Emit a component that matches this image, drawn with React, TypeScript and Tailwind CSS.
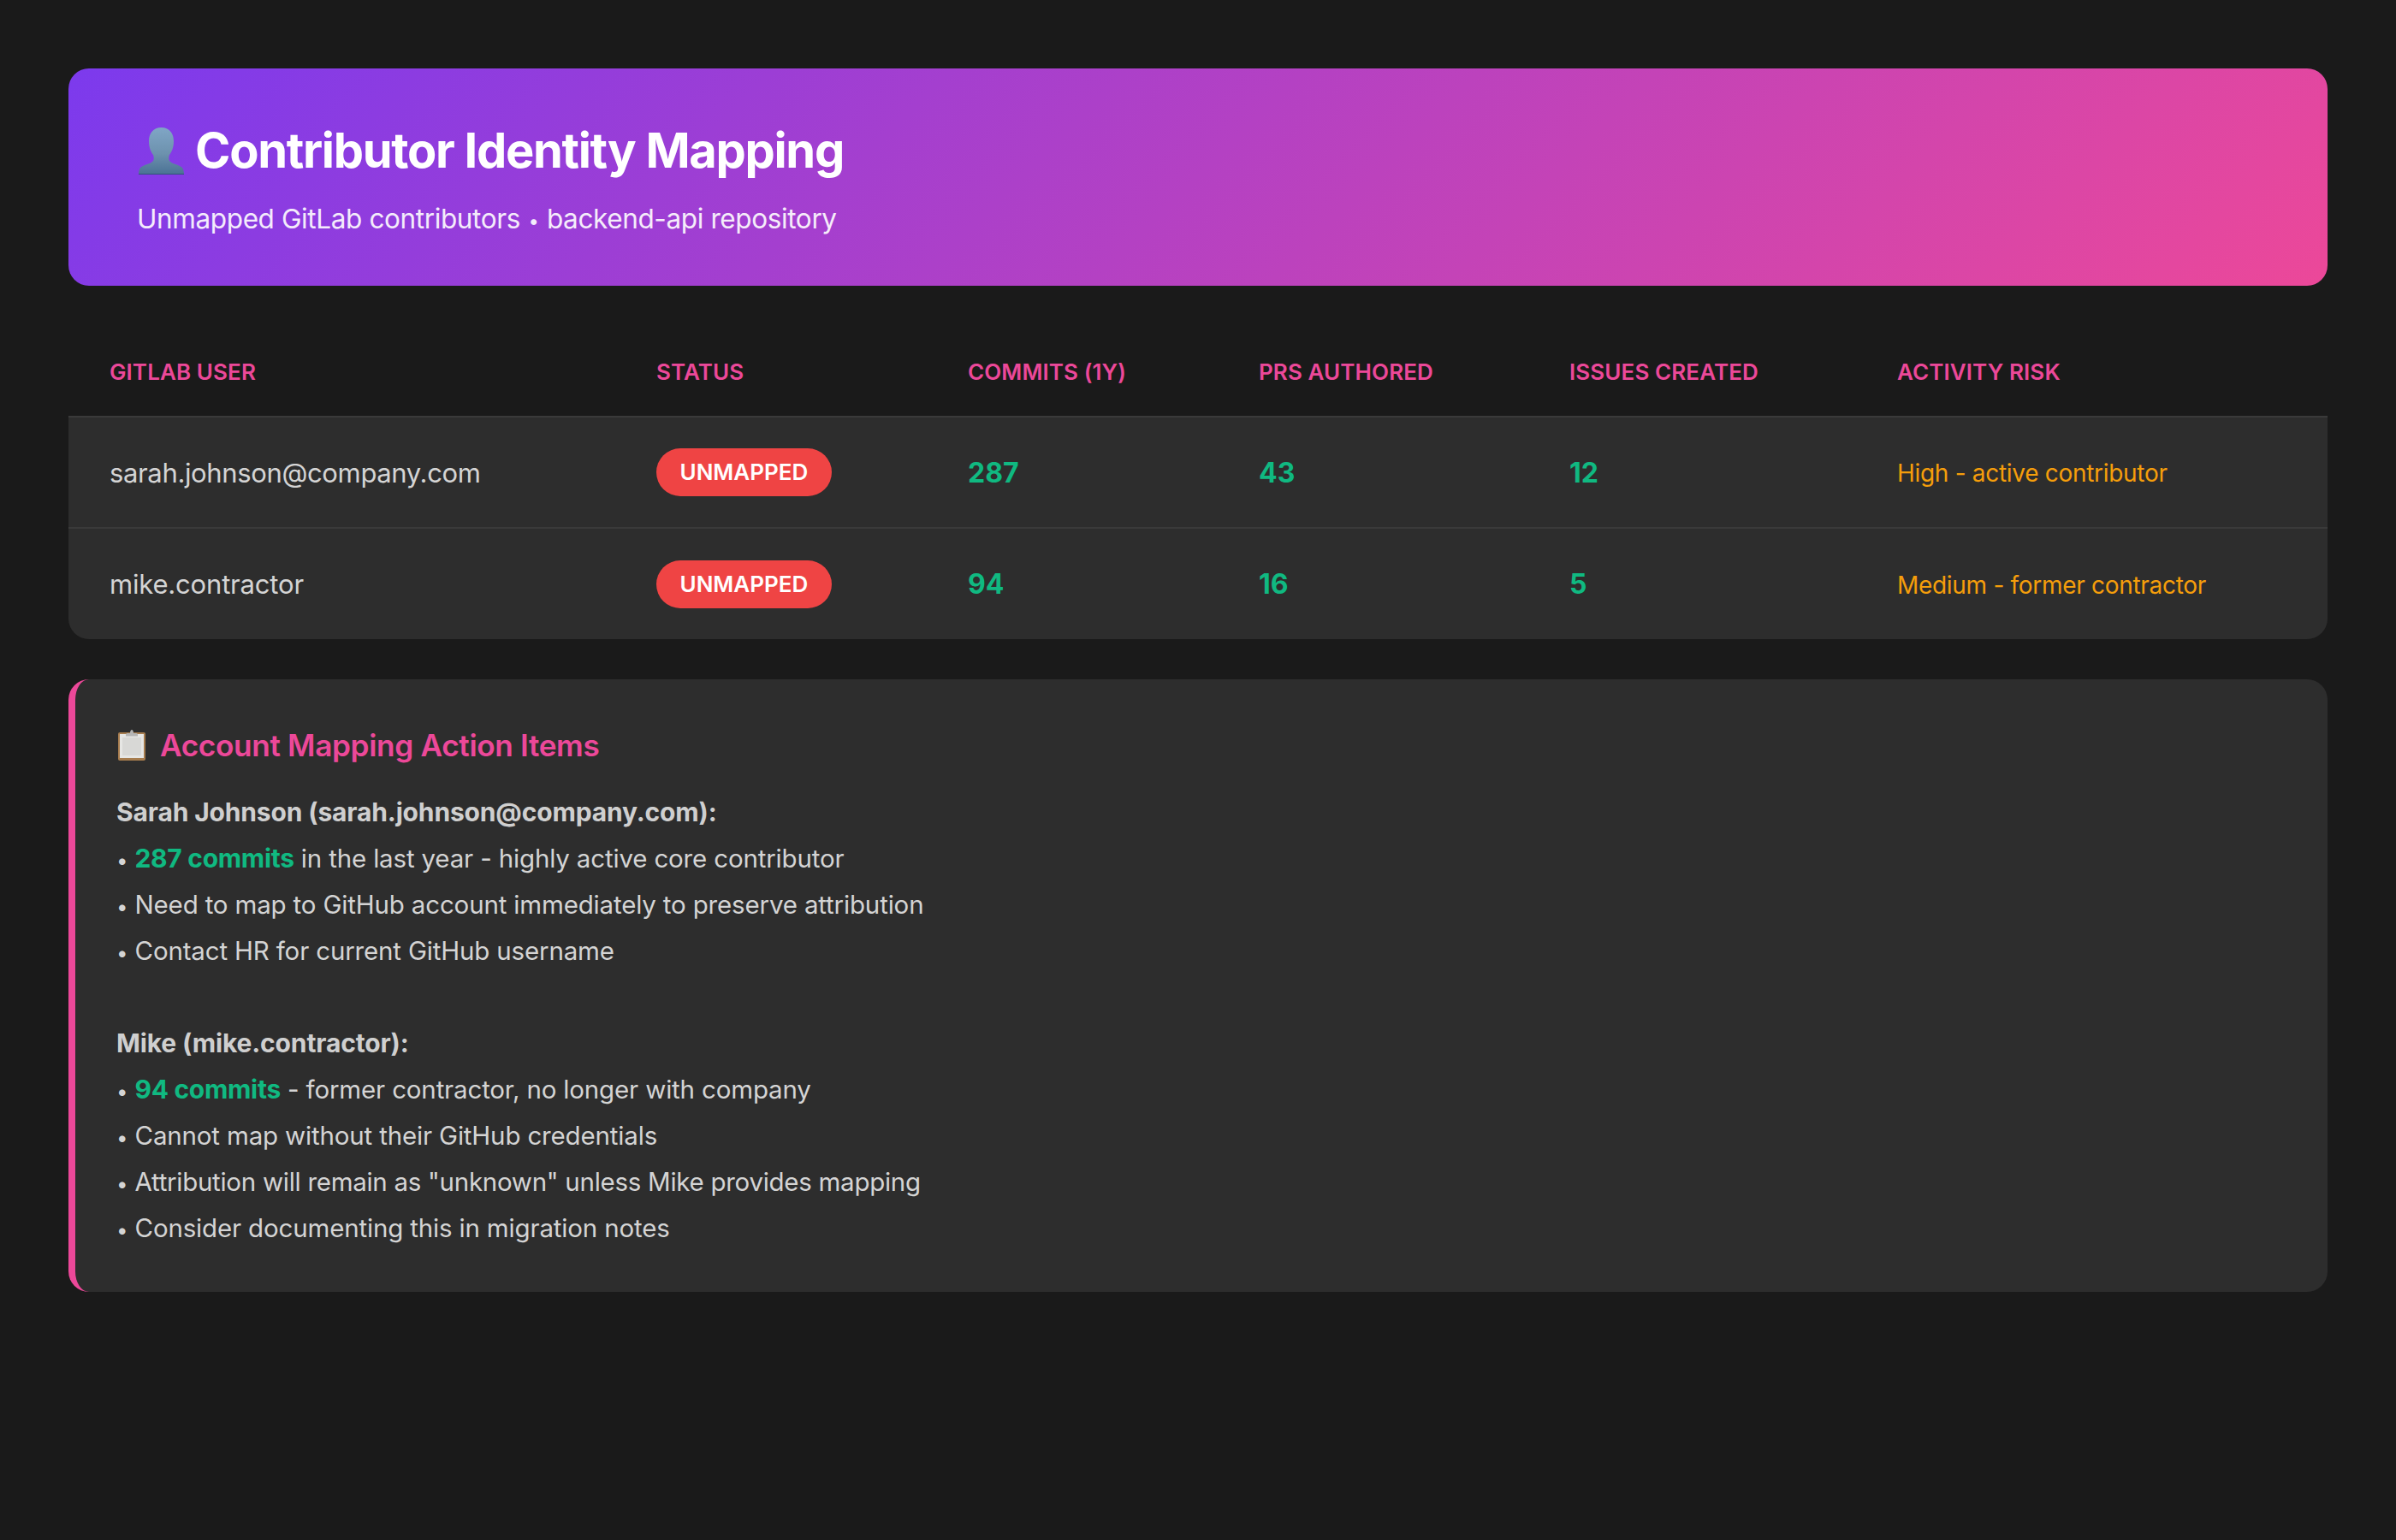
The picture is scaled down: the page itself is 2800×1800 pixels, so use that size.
const S = { fontFamily: 'Inter, "Noto Sans", sans-serif' };

function Bust() {
  return (
    <svg viewBox="0 0 53 55" className="w-[55px] h-[55px] shrink-0 ml-[1px] mr-[12px]" aria-hidden="true">
      <defs>
        <linearGradient id="bust" x1="0" y1="0" x2="0" y2="1">
          <stop offset="0" stopColor="#80a6c6" />
          <stop offset="0.55" stopColor="#6d92ae" />
          <stop offset="1" stopColor="#4a7194" />
        </linearGradient>
      </defs>
      <path
        d="M26.5 0C17 0 12 7 12 16c0 7 2 12 5 16 1 3 1 5 0 7-3 4-11 4-15 8-1.5 2-2 5-2 8h53c0-3-.5-6-2-8-4-4-12-4-15-8-1-2-1-4 0-7 3-4 5-9 5-16C41 7 36 0 26.5 0z"
        fill="url(#bust)"
      />
      <rect x="0" y="54" width="53" height="1" fill="#2f5578" />
    </svg>
  );
}

function Clipboard() {
  return (
    <svg viewBox="0 0 32 36" className="w-[32px] h-[36px] shrink-0" aria-hidden="true">
      <rect x="0" y="3" width="32" height="33" rx="2" fill="#a67c4e" />
      <rect x="2" y="5" width="28" height="28" fill="#e6e6e4" />
      <rect x="5" y="9" width="22" height="21" fill="#d8d8d6" />
      <path d="M9 6c0-1.5 1-2 3-2h2c0-2.500 1-4 2-4s2 1.500 2 4h2c2 0 3 .5 3 2v1.500H9z" fill="#b5b5b5" />
    </svg>
  );
}

const headers = ["GITLAB USER", "STATUS", "COMMITS (1Y)", "PRS AUTHORED", "ISSUES CREATED", "ACTIVITY RISK"];
const rows = [
  ["sarah.johnson@company.com", "287", "43", "12", "High - active contributor"],
  ["mike.contractor", "94", "16", "5", "Medium - former contractor"],
];

function Badge() {
  return (
    <span className="inline-block rounded-full bg-[#ef4444] text-white text-[26px] leading-[32px] font-semibold px-[27.5px] py-[12px] align-middle">
      UNMAPPED
    </span>
  );
}

function Bullet() {
  return <span className="inline-block w-[21.5px] text-[24px]">•</span>;
}

function Line({ children }: { children: React.ReactNode }) {
  return <div className="h-[54px] leading-[54px] text-[29.5px] tracking-[-0.165px]">{children}</div>;
}

function G({ children }: { children: React.ReactNode }) {
  return <strong className="font-bold text-[30px] tracking-[-0.3px] text-[#10b981]">{children}</strong>;
}

function B({ children }: { children: React.ReactNode }) {
  return <strong className="font-bold text-[30px] tracking-[-0.15px] text-[#cfcfcf]">{children}</strong>;
}

export default function App() {
  return (
    <div style={S} className="min-h-[1800px] bg-[#1a1a1a] p-[80px] text-[#e0e0e0]">
      <header className="h-[254px] rounded-[24px] bg-[linear-gradient(135deg,#7c3aed,#ec4899)] px-[80px] pt-[54px]">
        <h1 className="flex items-center text-[56px] leading-[84px] font-bold text-white tracking-[-1.3px]">
          <Bust />
          Contributor Identity Mapping
        </h1>
        <p className="mt-[14px] text-[31.5px] leading-[48px] tracking-[-0.38px] text-white opacity-90">
          Unmapped GitLab contributors <span className="inline-block text-[22px] px-[1px] align-[1px]">•</span> backend-api repository
        </p>
      </header>

      <table className="mt-[54px] w-full table-fixed border-collapse">
        <colgroup>
          <col className="w-[639px]" />
          <col className="w-[364px]" />
          <col className="w-[340px]" />
          <col className="w-[363px]" />
          <col className="w-[383px]" />
          <col className="w-[551px]" />
        </colgroup>
        <thead>
          <tr className="border-b-2 border-[#3a3a3a]">
            {headers.map((h) => (
              <th key={h} className="h-[99px] px-[48px] pb-[6px] text-left text-[26px] tracking-[0.1px] font-semibold text-[#ec4899] align-middle">
                {h}
              </th>
            ))}
          </tr>
        </thead>
        <tbody>
          {rows.map((r, i) => (
            <tr key={r[0]} className={i === 0 ? "bg-[#2d2d2d] border-b-2 border-[#3a3a3a]" : "bg-[#2d2d2d]"}>
              <td className={i === 1 ? "h-[130px] px-[48px] pt-[2px] text-[31px] tracking-[-0.18px] text-[#d4d4d4] rounded-bl-[24px]" : "h-[130px] px-[48px] pt-[2px] text-[31px] tracking-[-0.36px] text-[#d4d4d4]"}>{r[0]}</td>
              <td className="px-[48px]"><Badge /></td>
              <td className="px-[48px] pt-[1px] text-[32px] font-bold text-[#10b981]">{r[1]}</td>
              <td className="px-[48px] pt-[1px] text-[32px] font-bold text-[#10b981]">{r[2]}</td>
              <td className="px-[48px] pt-[1px] text-[32px] font-bold text-[#10b981]">{r[3]}</td>
              <td className={i === 1 ? "px-[48px] pt-[2px] text-[28px] tracking-[-0.3px] text-[#f59e0b] rounded-br-[24px]" : "px-[48px] pt-[2px] text-[28px] tracking-[-0.3px] text-[#f59e0b]"}>{r[4]}</td>
            </tr>
          ))}
        </tbody>
      </table>

      <section className="mt-[47px] h-[716px] rounded-[24px] border-l-[8px] border-[#ec4899] bg-[#2d2d2d] pl-[48px] pt-[50px] text-[#d4d4d4]">
        <h2 className="flex items-center text-[35.2px] leading-[54px] tracking-[-0.35px] font-semibold text-[#ec4899]">
          <span className="ml-[2px] mr-[17px] flex"><Clipboard /></span>
          Account Mapping Action Items
        </h2>
        <div className="mt-[24px]">
          <Line><B>Sarah Johnson (sarah.johnson@company.com):</B></Line>
          <Line><Bullet /><G>287 commits</G> in the last year - highly active core contributor</Line>
          <Line><Bullet />Need to map to GitHub account immediately to preserve attribution</Line>
          <Line><Bullet />Contact HR for current GitHub username</Line>
          <Line>{"\u00a0"}</Line>
          <Line><B>Mike (mike.contractor):</B></Line>
          <Line><Bullet /><G>94 commits</G> - former contractor, no longer with company</Line>
          <Line><Bullet />Cannot map without their GitHub credentials</Line>
          <Line><Bullet /><span className="tracking-[-0.28px]">Attribution will remain as "unknown" unless Mike provides mapping</span></Line>
          <Line><Bullet />Consider documenting this in migration notes</Line>
        </div>
      </section>
    </div>
  );
}
